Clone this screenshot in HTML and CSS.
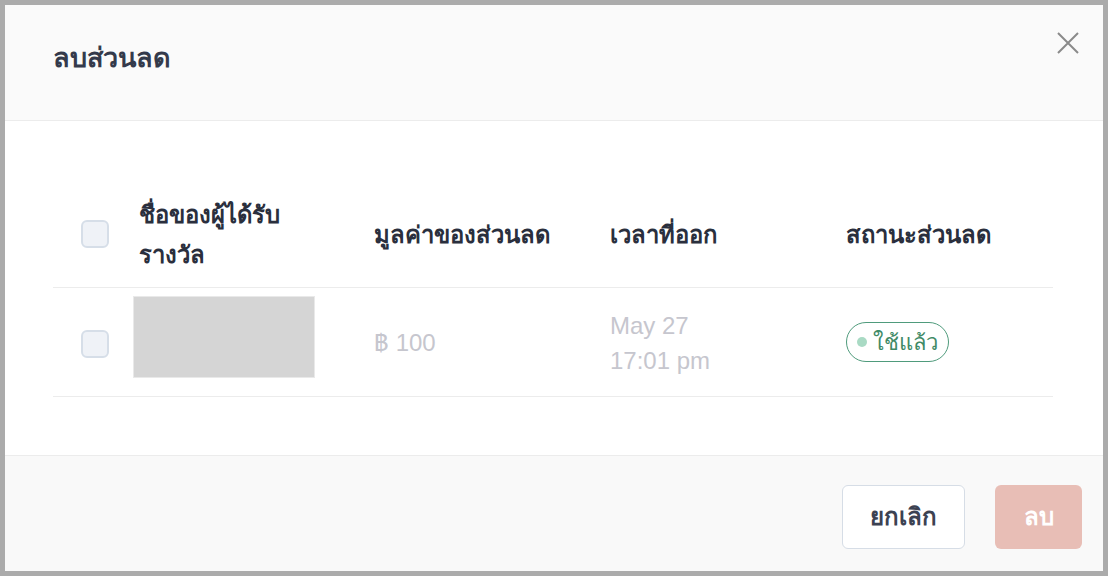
FILE: index.html
```html
<!DOCTYPE html>
<html lang="th">
    <head>
        <meta charset="UTF-8">
        <meta name="viewport" content="width=device-width, initial-scale=1.0">
        <title>ลบส่วนลด</title>
        <link rel="stylesheet" href="styles.css">
    </head>
    <body>
        <div class="modal">
            <header class="modal-header">
                <h2 class="modal-title">ลบส่วนลด</h2>
                <button class="close-btn" aria-label="close">
                    <svg width="22" height="22" viewBox="0 0 22 22">
                        <path d="M1 1 L21 21 M21 1 L1 21" stroke="#8a8a8a" stroke-width="2" fill="none"/>
                    </svg>
                </button>
            </header>

            <section class="modal-body">
                <div class="table">
                    <div class="row head">
                        <div class="cell check"><span class="checkbox"></span></div>
                        <div class="cell name-head">ชื่อของผู้ได้รับ<br>รางวัล</div>
                        <div class="cell">มูลค่าของส่วนลด</div>
                        <div class="cell">เวลาที่ออก</div>
                        <div class="cell">สถานะส่วนลด</div>
                    </div>
                    <div class="row">
                        <div class="cell check"><span class="checkbox body-check"></span></div>
                        <div class="cell thumb-cell"><div class="thumb"></div></div>
                        <div class="cell muted">฿ 100</div>
                        <div class="cell muted date">May 27<br>17:01 pm</div>
                        <div class="cell"><span class="badge"><span class="dot"></span>ใช้แล้ว</span></div>
                    </div>
                </div>
            </section>

            <footer class="modal-footer">
                <button class="btn btn-cancel">ยกเลิก</button>
                <button class="btn btn-delete">ลบ</button>
            </footer>
        </div>
    </body>
</html>
```

FILE: styles.css
```css
html, body {
    margin: 0;
    padding: 0;
}

body {
    font-family: "Noto Sans", "DejaVu Sans", sans-serif;
    background-color: #ababab;
    padding: 5px;
    height: 576px;
    box-sizing: border-box;
}

.modal {
    display: flex;
    flex-direction: column;
    height: 566px;
    background-color: #fff;
}

.modal-header {
    height: 116px;
    background-color: #fafafa;
    border-bottom: 1px solid #ececec;
    display: flex;
    align-items: center;
    justify-content: space-between;
    padding: 0 24px 0 48px;
    box-sizing: border-box;
    flex: none;
}

.modal-title {
    margin: 0 0 10px 0;
    font-size: 27px;
    font-weight: bold;
    color: #343a4b;
}

.close-btn {
    border: none;
    background: none;
    padding: 0;
    margin-bottom: 40px;
    line-height: 0;
    cursor: pointer;
}

.modal-body {
    flex: 1;
    padding: 60px 50px 0 48px;
}

.row {
    display: grid;
    grid-template-columns: 80px 241px 236px 236px 1fr;
    align-items: center;
    border-bottom: 1px solid #ececec;
    height: 108px;
}

.row.head {
    height: 106px;
    font-size: 23.8px;
    font-weight: bold;
    color: #2a2f3d;
}

.name-head {
    padding-left: 6px;
    line-height: 40px;
}

.check {
    padding-left: 28px;
}

.checkbox {
    display: block;
    width: 24px;
    height: 24px;
    border: 2px solid #d6dee8;
    border-radius: 6px;
    background-color: #eff2f7;
}

.body-check {
    margin-top: 3px;
}

.thumb-cell {
    align-self: start;
    padding-top: 8px;
}

.thumb {
    width: 180px;
    height: 80px;
    background-color: #d5d5d5;
    border: 1px solid #e9e9e9;
}

.muted {
    font-family: "Liberation Sans", Arial, sans-serif;
    font-size: 24px;
    color: #c6c6ce;
}

.date {
    line-height: 35px;
    padding-top: 2px;
}

.badge {
    display: inline-flex;
    align-items: center;
    gap: 6px;
    height: 40px;
    padding: 0 10px 0 10px;
    border: 1px solid #4f9b7c;
    border-radius: 20px;
    color: #3f8a66;
    font-family: "DejaVu Serif", serif;
    font-size: 22px;
    box-sizing: border-box;
}

.dot {
    width: 10px;
    height: 10px;
    border-radius: 50%;
    background-color: #a9dac4;
}

.modal-footer {
    height: 116px;
    flex: none;
    background-color: #f9f9f9;
    border-top: 1px solid #ececec;
    display: flex;
    justify-content: flex-end;
    align-items: center;
    gap: 30px;
    padding: 6px 21px 0 0;
    box-sizing: border-box;
}

.btn {
    height: 64px;
    border-radius: 6px;
    font-family: "Noto Sans", "DejaVu Sans", sans-serif;
    font-size: 24px;
    font-weight: bold;
    cursor: pointer;
}

.btn-cancel {
    width: 123px;
    background-color: #fff;
    border: 1px solid #d6dde6;
    color: #3c4252;
}

.btn-delete {
    width: 87px;
    background-color: #e8beb6;
    border: none;
    color: #fff;
}
```
